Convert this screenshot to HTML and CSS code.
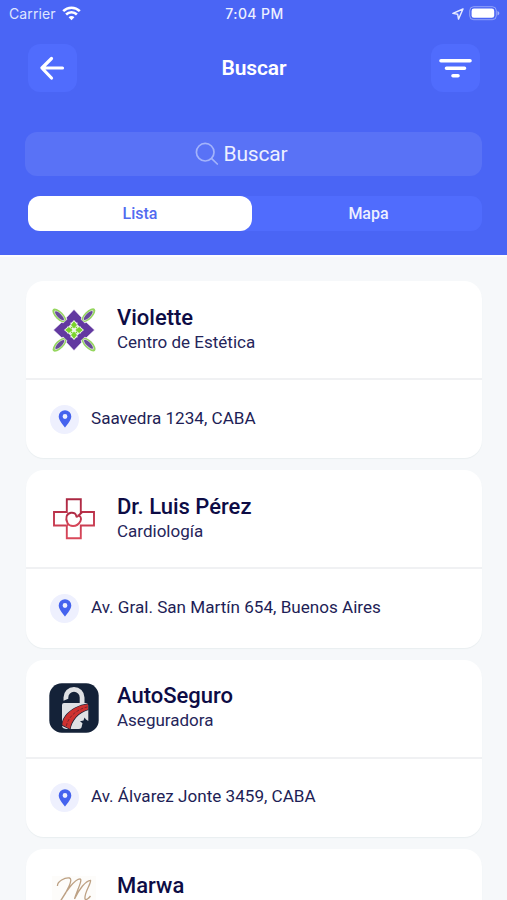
FILE: index.html
```html
<!DOCTYPE html>
<html lang="es">
<head>
  <meta charset="UTF-8">
  <meta name="viewport" content="width=device-width, initial-scale=1.0">
  <title>Buscar</title>
  <link rel="stylesheet" href="styles.css">
</head>
<body>
  <svg class="defs" width="0" height="0">
    <symbol id="pin" viewBox="0 0 14 20">
      <path fill-rule="evenodd" d="M7 1.200A6.300 6.300 0 0 0 .7 7.500C.7 11.600 7 18.500 7 18.500s6.300-6.900 6.300-11A6.300 6.300 0 0 0 7 1.200zm0 3.900a2.400 2.400 0 1 1 0 4.800 2.400 2.400 0 0 1 0-4.800z"/>
    </symbol>
  </svg>

  <header class="header">
    <div class="status-bar">
      <div class="status-left">
        <span class="carrier">Carrier</span>
        <svg width="19" height="15" viewBox="0 0 19 15" fill="none" stroke="#fff" stroke-width="2.600">
          <path d="M1.200 5.200a11.800 11.800 0 0 1 16.600 0"/>
          <path d="M4.100 8.500a7.700 7.700 0 0 1 10.800 0"/>
          <path d="M6.600 11.200a4 4 0 0 1 5.800 0L9.500 14.300z" fill="#fff" stroke="none"/>
        </svg>
      </div>
      <span class="time">7:04 PM</span>
      <div class="status-right">
        <svg width="12" height="12" viewBox="0 0 12 12" fill="none" stroke="#e8ecff" stroke-width="1.400" stroke-linejoin="round">
          <path d="M11 1L.9 5.400l4.800.9.8 4.800z"/>
        </svg>
        <svg width="31" height="15" viewBox="0 0 31 15">
          <rect x=".7" y=".7" width="26.600" height="13" rx="4" fill="none" stroke="#fff" stroke-opacity=".4"/>
          <rect x="2.600" y="2.600" width="22.600" height="9.200" rx="2.300" fill="#fff"/>
          <path d="M28.500 5v4.600c1.200-.5 1.800-1.300 1.800-2.300S29.700 5.500 28.500 5z" fill="#fff" fill-opacity=".5"/>
        </svg>
      </div>
    </div>

    <div class="nav-bar">
      <button class="icon-btn" aria-label="Volver">
        <svg width="49" height="48" viewBox="0 0 49 48" fill="none" stroke="#fff" stroke-width="3.200" stroke-linecap="round" stroke-linejoin="round">
          <path d="M23.500 14.500L13.900 24l9.600 10M14 24h20.500"/>
        </svg>
      </button>
      <h1 class="title">Buscar</h1>
      <button class="icon-btn" aria-label="Filtrar">
        <svg width="49" height="48" viewBox="0 0 49 48" fill="none" stroke="#fff" stroke-width="3.600" stroke-linecap="round">
          <path d="M10 16.700h29M15.500 24.200h18M22 31.700h5"/>
        </svg>
      </button>
    </div>

    <div class="search">
      <svg width="24" height="24" viewBox="0 0 24 24" fill="none" stroke="#a3b3fb" stroke-width="1.700" stroke-linecap="round">
        <circle cx="10.200" cy="10.200" r="8.800"/>
        <path d="M16.700 16.700l5.600 5.300"/>
      </svg>
      <span>Buscar</span>
    </div>

    <div class="tabs">
      <button class="tab active">Lista</button>
      <button class="tab">Mapa</button>
    </div>
  </header>

  <main class="list">
    <article class="card">
      <div class="card-top">
        <svg class="logo" viewBox="0 0 50 50">
          <g id="leaf">
            <ellipse cx="10.300" cy="10.600" rx="4" ry="9" transform="rotate(-45 10.300 10.600)" fill="#95d65e"/>
            <ellipse cx="10.500" cy="10.800" rx="2.500" ry="7" transform="rotate(-45 10.500 10.800)" fill="#dcd9e4"/>
            <ellipse cx="10.500" cy="10.800" rx="2" ry="6" transform="rotate(-45 10.500 10.800)" fill="#674b98"/>
          </g>
          <use href="#leaf" transform="rotate(90 25 25)"/>
          <use href="#leaf" transform="rotate(180 25 25)"/>
          <use href="#leaf" transform="rotate(270 25 25)"/>
          <path d="M25 4.500l7.500 8-.3 2 3.300 3.300 2-.3 8 7.500-8 7.500-2-.3-3.300 3.300.3 2-7.500 8-7.500-8 .3-2-3.300-3.300-2 .3-8-7.500 8-7.500 2 .3 3.300-3.300-.3-2z" fill="#6239a0" stroke="#fff" stroke-width=".5"/>
          <path d="M25 15l2.300 2.500h4.500v4.700l3.200 2.800-3.200 2.800v4.700h-4.500L25 35l-2.300-2.500h-4.500v-4.700L15 25l3.200-2.800v-4.700h4.500z" fill="#f1f6ec"/>
          <g id="petal">
            <path d="M16.500 16.500h5v3l-2 2h-3z" fill="#6239a0"/>
            <path d="M25 16.200l3 3.700-3 3.700-3-3.700z" fill="#79d32b"/>
            <path d="M21.500 21.500l2.300.8-1.500 1.500z" fill="#79d32b"/>
          </g>
          <use href="#petal" transform="rotate(90 25 25)"/>
          <use href="#petal" transform="rotate(180 25 25)"/>
          <use href="#petal" transform="rotate(270 25 25)"/>
        </svg>
        <div class="info">
          <h2 class="name">Violette</h2>
          <p class="kind">Centro de Estética</p>
        </div>
      </div>
      <div class="card-bottom">
        <span class="pin"><svg width="14" height="20"><use href="#pin"/></svg></span>
        <span class="address">Saavedra 1234, CABA</span>
      </div>
    </article>

    <article class="card">
      <div class="card-top">
        <svg class="logo" viewBox="0 0 50 50">
          <defs>
            <linearGradient id="red" x1="0" y1="0" x2="0" y2="1">
              <stop offset="0" stop-color="#ab2742"/>
              <stop offset="1" stop-color="#d9485a"/>
            </linearGradient>
          </defs>
          <g fill="none" stroke="url(#red)" stroke-width="1.900">
            <path d="M17 31.500H5V18h12.800V5.200h14V18H45v13.500H31.800v12.800h-14V31"/>
            <path d="M17 31.500c2 0 2.300-.8 1.500-2.500C16 24 17.500 19.500 22 18.800c3-.4 5 1 5.200 3.200.2 1 1.200 1 2 0L33 18.300M28.500 21.500c3 0 4.300 2.500 3 5.500-1.500 3-4.500 5-7.500 5-2.500 0-4.500-1-5.800-3"/>
          </g>
        </svg>
        <div class="info">
          <h2 class="name">Dr. Luis Pérez</h2>
          <p class="kind">Cardiología</p>
        </div>
      </div>
      <div class="card-bottom">
        <span class="pin"><svg width="14" height="20"><use href="#pin"/></svg></span>
        <span class="address">Av. Gral. San Martín 654, Buenos Aires</span>
      </div>
    </article>

    <article class="card">
      <div class="card-top">
        <svg class="logo" viewBox="0 0 50 50">
          <rect x=".3" y=".3" width="49.400" height="49.400" rx="12.500" fill="#142238"/>
          <path d="M14.500 17.800v-3.300a10.500 10.500 0 0 1 21 0V22h-4.800v-7.500a5.700 5.700 0 0 0-11.400 0v1.300z" fill="#dfe1e4"/>
          <path d="M15 20h22q2.300 0 2.300 2.500V38l-2.300-1.500-1.500-2-1 3-3.500.8 2.500 2L32.500 44.500q-1 1.500-3 1.500H17q-4-.5-4-3.500V22q0-2 2-2z" fill="#dfe1e4"/>
          <path d="M39.500 20.500C27 21.500 13 30.500 12.500 42.500L21.500 47C22.500 38 30 29.500 39.500 27z" fill="#142238"/>
          <path d="M39 21.300C27 22.300 14 31 13.300 42L21 46C22 37 30 28.800 39 26.500z" fill="#cf3230"/>
          <path d="M38.500 23.900C28.500 26 19 33.500 17.200 43.500" fill="none" stroke="#70212d" stroke-width=".9" stroke-dasharray="3 1.500"/>
        </svg>
        <div class="info">
          <h2 class="name">AutoSeguro</h2>
          <p class="kind">Aseguradora</p>
        </div>
      </div>
      <div class="card-bottom">
        <span class="pin"><svg width="14" height="20"><use href="#pin"/></svg></span>
        <span class="address">Av. Álvarez Jonte 3459, CABA</span>
      </div>
    </article>

    <article class="card">
      <div class="card-top">
        <svg class="logo" viewBox="0 0 50 50">
          <rect x="3" y="3" width="44" height="44" fill="#fdfcfa"/>
          <path d="M8.500 13C8 8.500 16 4.300 20.500 5c4 1-2 13-9 23C17 18 26 6 31 5.800c3 .5-3 11.700-5.500 20.200C30 16 37 7.500 41.500 7.300c1 3-6.500 12.200-5.500 18.700 1.500 1.500 4-1 5.500-3" fill="none" stroke="#bda184" stroke-width="1.300"/>
        </svg>
        <div class="info">
          <h2 class="name">Marwa</h2>
          <p class="kind"></p>
        </div>
      </div>
    </article>
  </main>
</body>
</html>
```
FILE: styles.css
```css
* {
  box-sizing: border-box;
}
body {
  font-family: Roboto, sans-serif;
  margin: 0;
  height: 900px;
  overflow: hidden;
  background: #f6f8fa;
  color: #0d0c45;
}
h1, h2, p {
  margin: 0;
}
button {
  font-family: inherit;
  border: none;
  padding: 0;
}
svg {
  display: block;
}
.defs {
  display: none;
}

/* Header */
.header {
  height: 257px;
  padding: 0 25px;
  background: #4a65f5;
  border-bottom: 2px solid #fdfdff;
}
.status-bar {
  display: grid;
  grid-template-columns: 1fr auto 1fr;
  align-items: center;
  height: 27px;
  margin: 0 -18px 0 -16px;
  font-family: Inter, sans-serif;
  color: #fff;
}
.status-left {
  display: flex;
  align-items: center;
  gap: 6px;
}
.carrier {
  font-size: 14px;
  letter-spacing: 0.1px;
  color: #dfe5ff;
}
.time {
  font-size: 14px;
  font-weight: 500;
  letter-spacing: 0.4px;
  color: #edf0ff;
}
.status-right {
  display: flex;
  justify-content: flex-end;
  align-items: center;
  gap: 5px;
}
.nav-bar {
  display: flex;
  justify-content: space-between;
  align-items: center;
  padding: 17px 2px 0 3px;
}
.icon-btn {
  width: 49px;
  height: 48px;
  border-radius: 12px;
  background: #506cfd;
}
.title {
  font-size: 21px;
  line-height: 24px;
  font-weight: 600;
  letter-spacing: -0.1px;
  color: #fff;
}
.search {
  display: flex;
  justify-content: center;
  align-items: center;
  gap: 5px;
  height: 44px;
  margin-top: 40px;
  padding-right: 25px;
  border-radius: 12px;
  background: #5972f6;
  font-size: 21px;
  letter-spacing: -0.2px;
  color: #edf0ff;
}
.tabs {
  display: flex;
  height: 35px;
  margin: 20px 0 0 3px;
  border-radius: 11px;
  background: #506cfd;
}
.tab {
  flex: 1 1 0;
  border-radius: 12px;
  background: none;
  font-size: 16px;
  font-weight: 500;
  color: #edf0ff;
}
.tab:last-child {
  padding-left: 3px;
}
.tab.active {
  flex: 0 0 224px;
  background: #fff;
  color: #526bf0;
}

/* Results */
.list {
  display: flex;
  flex-direction: column;
  gap: 12px;
  height: 643px;
  padding: 24px 25px 0 26px;
  overflow: hidden;
}
.card {
  flex: none;
  height: 177.4px;
  border-radius: 18px;
  background: #fff;
  box-shadow: 0 1px 1px #e9eef0;
}
.card:last-child {
  flex: 1 1 0;
  height: auto;
  min-height: 0;
  border-radius: 18px 18px 0 0;
  overflow: hidden;
}
.card-top {
  display: flex;
  align-items: center;
  gap: 18px;
  height: 99px;
  padding-left: 23px;
  border-bottom: 2px solid #f0f1f3;
}
.logo {
  width: 50px;
  height: 50px;
}
.name {
  font-size: 22px;
  line-height: 26px;
  font-weight: 500;
}
.kind {
  height: 24px;
  font-size: 17px;
  line-height: 22px;
  color: #25255a;
}
.card-bottom {
  display: flex;
  align-items: center;
  gap: 12px;
  height: 78px;
  padding-left: 24px;
}
.pin {
  display: flex;
  justify-content: center;
  align-items: center;
  width: 29px;
  height: 29px;
  border-radius: 50%;
  background: #eef0fe;
  fill: #4563ee;
}
.address {
  padding-bottom: 3px;
  font-size: 17.1px;
  color: #1e1e56;
}
```
